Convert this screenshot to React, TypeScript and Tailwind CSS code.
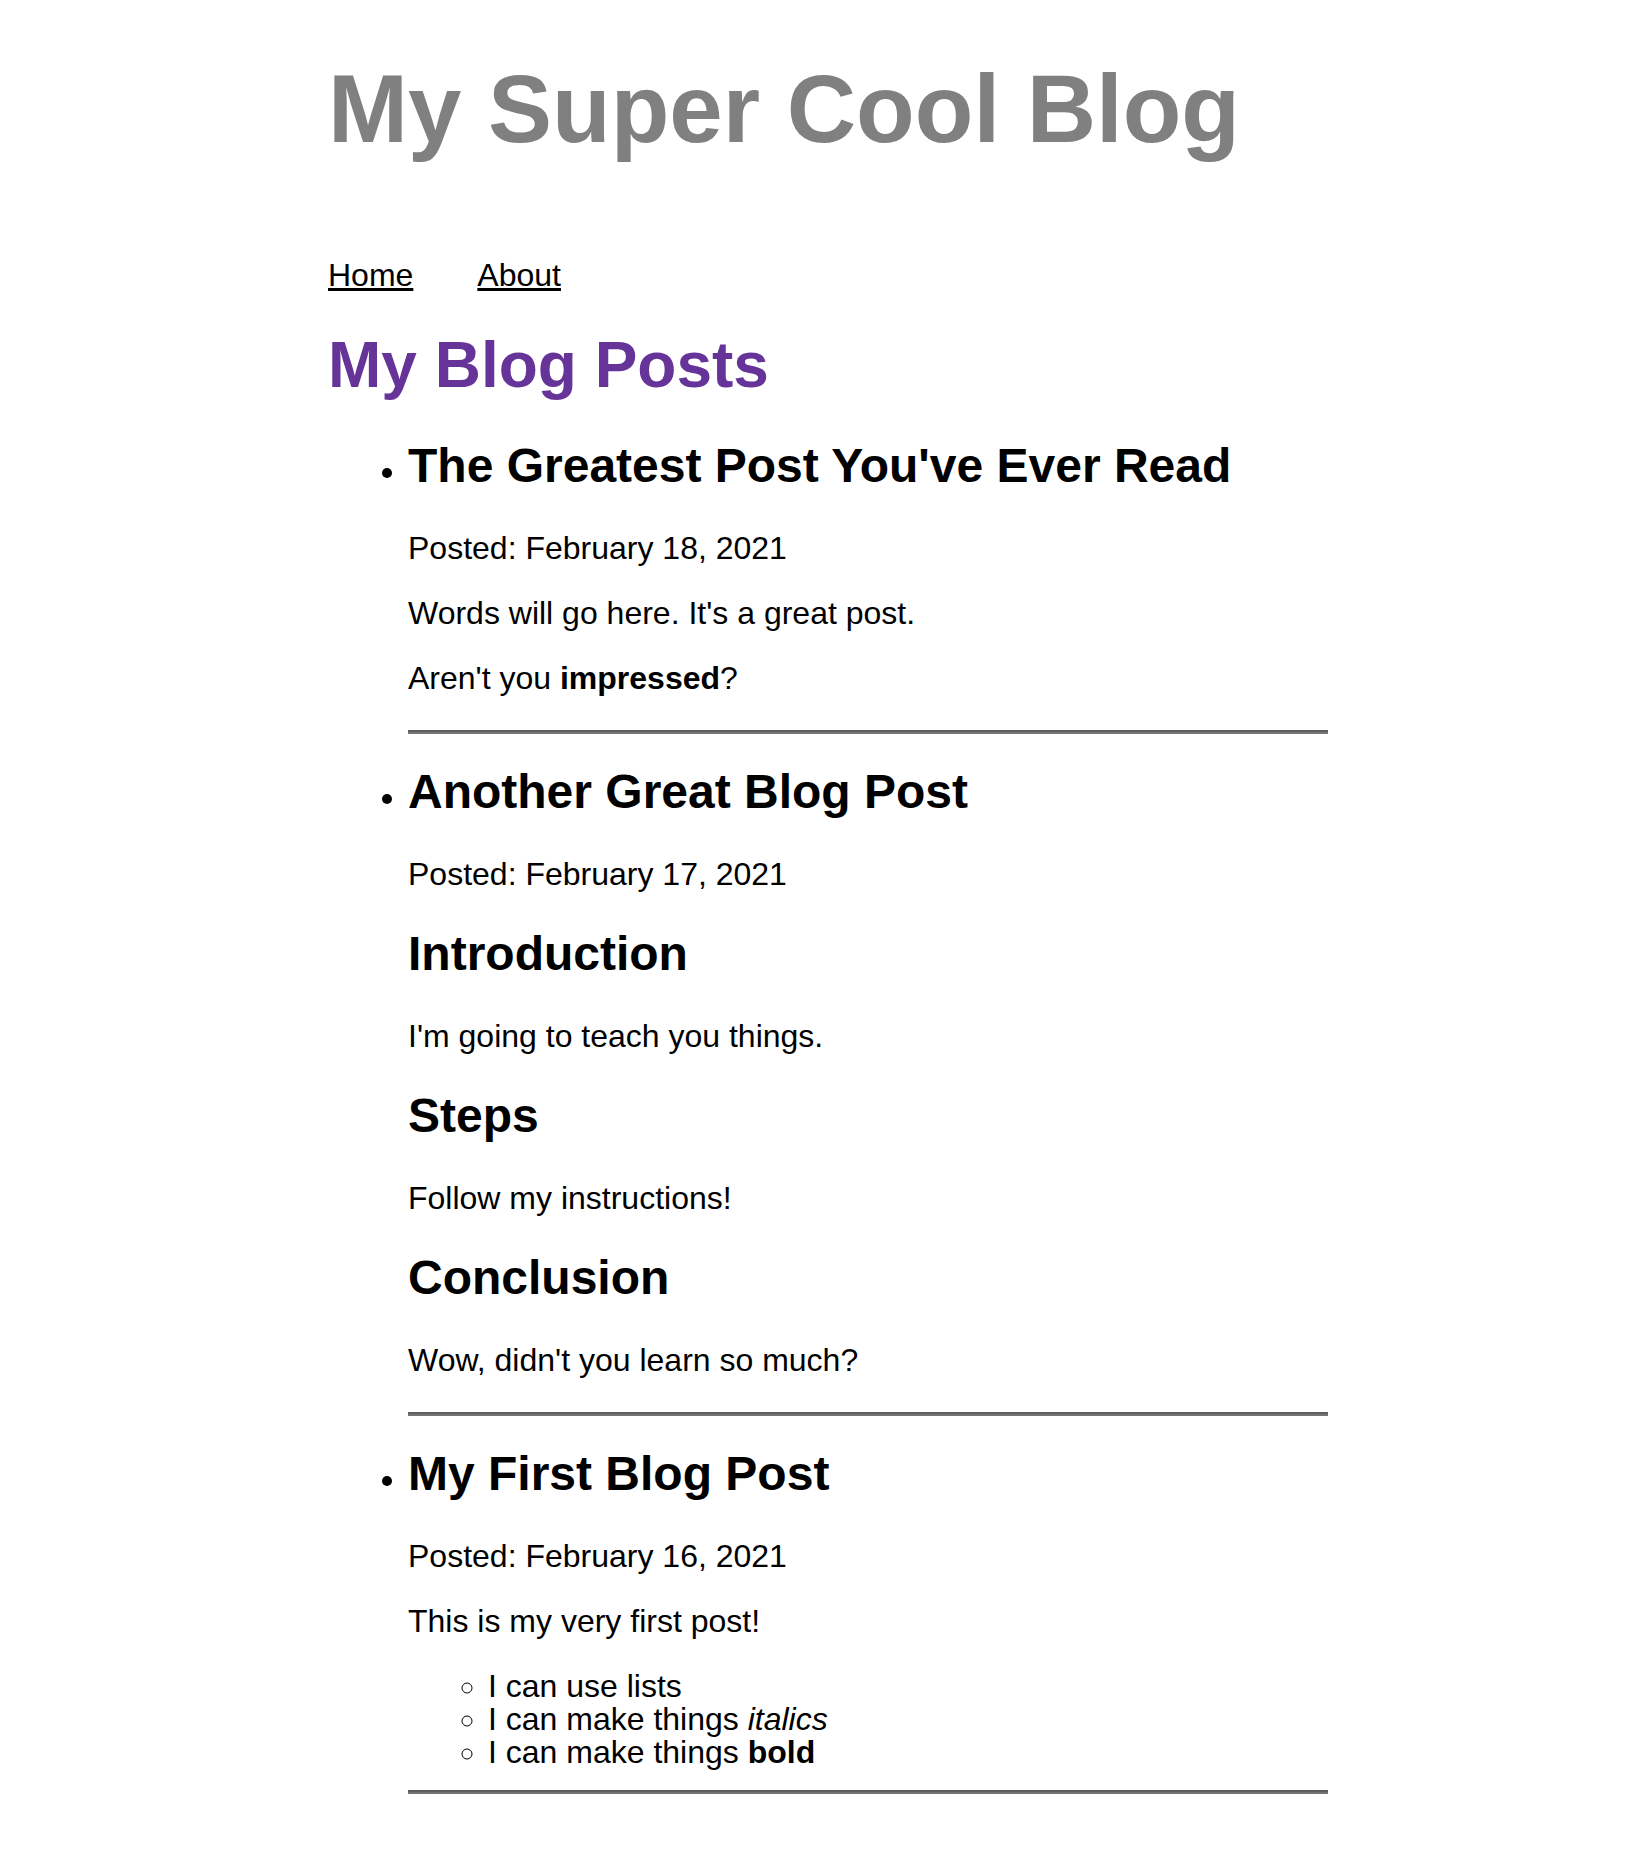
import type { ReactNode } from "react";

interface PostProps {
  title: string;
  date: string;
  children: ReactNode;
  endsWithList?: boolean;
}

function Post({ title, date, children, endsWithList }: PostProps) {
  return (
    <li>
      <h2 className="mt-[34px] mb-[42px] text-[48px] leading-[48px] font-bold">
        {title}
      </h2>
      <p className="my-[32px]">Posted: {date}</p>
      {children}
      <hr
        className={
          endsWithList
            ? "mt-[21px] h-0 border-0 border-t-2 border-b-2 border-t-[#5e5e5e] border-b-[#747474]"
            : "mt-[35px] h-0 border-0 border-t-2 border-b-2 border-t-[#5e5e5e] border-b-[#747474]"
        }
      />
    </li>
  );
}

function Section({ heading, children }: { heading: string; children: ReactNode }) {
  return (
    <>
      <h2 className="mt-[39px] mb-[42px] text-[48px] leading-[48px] font-bold">
        {heading}
      </h2>
      <p className="my-[32px]">{children}</p>
    </>
  );
}

export default function App() {
  return (
    <div className="min-h-screen bg-white text-black font-['Liberation_Sans',Arial,sans-serif] text-[32px] leading-[33px]">
      <div className="ml-[328px] w-[1000px] pt-[61px] pb-[80px]">
        <h1 className="text-[96px] leading-[96px] font-bold text-[#808080]">
          My Super Cool Blog
        </h1>

        <nav className="mt-[102px] flex gap-[64px] text-[32px] leading-[32px]">
          <a href="#" className="underline">
            Home
          </a>
          <a href="#" className="underline">
            About
          </a>
        </nav>

        <h1 className="mt-[42px] text-[64px] leading-[64px] font-bold text-[#663399]">
          My Blog Posts
        </h1>

        <ul className="mt-[45px] list-disc pl-[80px]">
          <Post title="The Greatest Post You've Ever Read" date="February 18, 2021">
            <p className="my-[32px]">Words will go here. It's a great post.</p>
            <p className="my-[32px]">
              Aren't you <strong className="font-bold">impressed</strong>?
            </p>
          </Post>

          <Post title="Another Great Blog Post" date="February 17, 2021">
            <Section heading="Introduction">I'm going to teach you things.</Section>
            <Section heading="Steps">Follow my instructions!</Section>
            <Section heading="Conclusion">Wow, didn't you learn so much?</Section>
          </Post>

          <Post title="My First Blog Post" date="February 16, 2021" endsWithList>
            <p className="my-[32px]">This is my very first post!</p>
            <ul className="list-[circle] pl-[80px]">
              <li>I can use lists</li>
              <li>
                I can make things <em className="italic">italics</em>
              </li>
              <li>
                I can make things <strong className="font-bold">bold</strong>
              </li>
            </ul>
          </Post>
        </ul>
      </div>
    </div>
  );
}
